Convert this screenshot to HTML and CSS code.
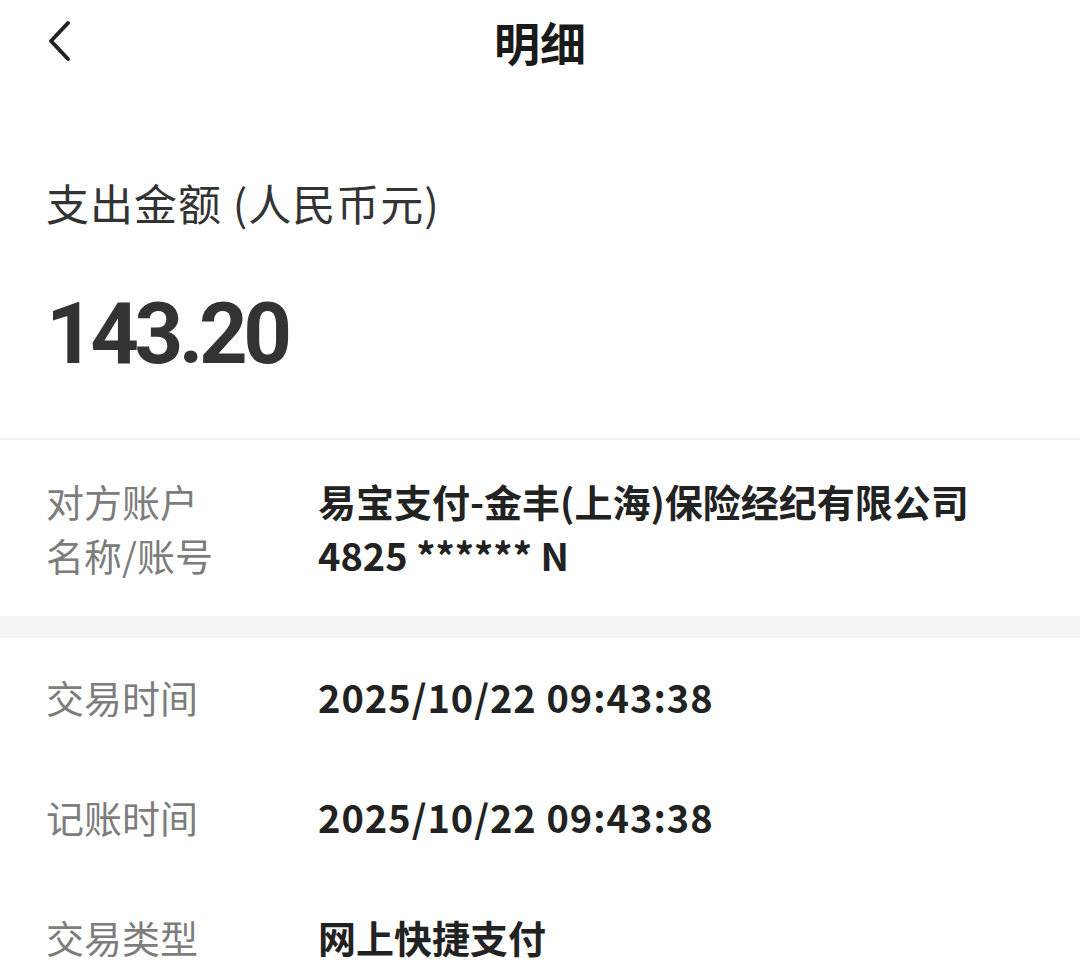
FILE: index.html
```html
<!DOCTYPE html>
<html lang="zh-CN">

<head>
    <meta charset="UTF-8">
    <meta name="viewport" content="width=device-width, initial-scale=1.0">
    <title>明细</title>
    <link rel="stylesheet" href="styles.css">
</head>

<body>
    <div class="page">
        <div class="header">
            <a class="back" href="#">
                <svg width="26" height="42" viewBox="0 0 26 42">
                    <path d="M22 3 L5 21 L22 39" fill="none" stroke="#222" stroke-width="4" stroke-linecap="round" stroke-linejoin="round" />
                </svg>
            </a>
            <h1>明细</h1>
            <div></div>
        </div>

        <div class="summary">
            <div class="summary-label">支出金额 (人民币元)</div>
            <div class="amount">143.20</div>
        </div>

        <div class="section">
            <div class="row">
                <div class="label">对方账户<br>名称/账号</div>
                <div class="value">易宝支付-金丰(上海)保险经纪有限公司<br>4825 ****** N</div>
            </div>
        </div>

        <div class="section">
            <div class="row">
                <div class="label">交易时间</div>
                <div class="value date">2025/10/22 09:43:38</div>
            </div>
            <div class="row">
                <div class="label">记账时间</div>
                <div class="value date">2025/10/22 09:43:38</div>
            </div>
            <div class="row">
                <div class="label">交易类型</div>
                <div class="value">网上快捷支付</div>
            </div>
        </div>
    </div>
</body>

</html>
```

FILE: styles.css
```css
body {
    margin: 0;
    background-color: #fff;
    font-family: "Noto Sans CJK SC", "Noto Sans", sans-serif;
    color: #222;
}

.page {
    width: 1080px;
    overflow: hidden;
}

.header {
    display: grid;
    grid-template-columns: 1fr auto 1fr;
    align-items: center;
    height: 82px;
}

.back {
    display: flex;
    align-items: center;
    padding-left: 46px;
}

h1 {
    margin: 0;
    font-size: 46px;
    font-weight: bold;
    line-height: 82px;
    color: #1a1a1a;
}

.summary {
    padding: 92px 46px 54px;
    border-bottom: 2px solid #f2f2f2;
}

.summary-label {
    font-size: 43px;
    line-height: 56px;
    letter-spacing: 1px;
    color: #333;
}

.amount {
    margin-top: 54px;
    font-family: Roboto, "Noto Sans", sans-serif;
    font-size: 85px;
    font-weight: bold;
    line-height: 100px;
    letter-spacing: -4.5px;
    color: #333;
}

.section {
    padding: 34px 0;
}

.section + .section {
    border-top: 22px solid #f4f4f4;
    padding: 0;
}

.row {
    display: flex;
    padding: 0 46px;
    font-size: 38px;
    line-height: 54px;
}

.section + .section .row {
    padding-top: 32px;
    padding-bottom: 34px;
}

.label {
    width: 272px;
    flex-shrink: 0;
    color: #7d7d7d;
}

.value {
    font-weight: bold;
    color: #222;
}

.date {
    letter-spacing: 1px;
}
```
